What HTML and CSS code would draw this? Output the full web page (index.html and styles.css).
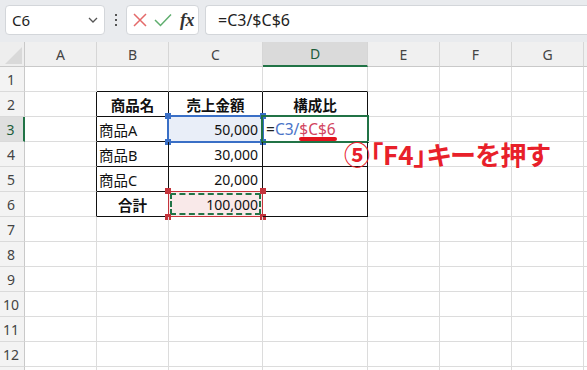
FILE: index.html
```html
<!DOCTYPE html>
<html lang="ja">
<head>
<meta charset="utf-8">
<link rel="stylesheet" href="styles.css">
</head>
<body>
<div class="app">
  <div class="toolbar">
    <div class="namebox"><span>C6</span>
      <svg class="chev" width="10" height="6" viewBox="0 0 10 6"><path d="M1 1 L5 5 L9 1" fill="none" stroke="#555" stroke-width="1.3"/></svg>
    </div>
    <div class="kebab"><i></i><i></i><i></i></div>
    <div class="fbtns">
      <svg class="ix" width="14" height="14" viewBox="0 0 14 14"><path d="M1 1 L13 13 M13 1 L1 13" stroke="#e46a6a" stroke-width="1.5" fill="none"/></svg>
      <svg class="ic" width="18" height="14" viewBox="0 0 18 14"><path d="M1 7 L6.5 12.5 L17 1.5" stroke="#5fae6e" stroke-width="1.5" fill="none"/></svg>
      <span class="fx">fx</span>
    </div>
    <div class="formula">=C3/$C$6</div>
  </div>

  <div class="sheet">
    <div class="corner"></div><div class="ch">A</div><div class="ch">B</div><div class="ch">C</div><div class="ch sel">D</div><div class="ch">E</div><div class="ch">F</div><div class="ch">G</div><div class="ch"></div>

    <div class="rh">1</div><div class="c"></div><div class="c tb"></div><div class="c tb"></div><div class="c tb"></div><div class="c"></div><div class="c"></div><div class="c"></div><div class="c"></div>

    <div class="rh">2</div><div class="c tl"></div><div class="c t hd">商品名</div><div class="c t hd">売上金額</div><div class="c t hd">構成比</div><div class="c"></div><div class="c"></div><div class="c"></div><div class="c"></div>

    <div class="rh rsel">3</div><div class="c tl"></div><div class="c t lt">商品A</div>
    <div class="c t num csel">50,000<span class="selbox"><i class="k k1"></i><i class="k k2"></i><i class="k k3"></i><i class="k k4"></i></span></div>
    <div class="c t lt active"><span class="eq">=</span><span class="r1">C3/</span><span class="r2">$C$6</span><span class="uline"></span></div>
    <div class="c"></div><div class="c"></div><div class="c"></div><div class="c"></div>

    <div class="rh">4</div><div class="c tl"></div><div class="c t lt">商品B</div><div class="c t num">30,000</div><div class="c t"></div><div class="c"></div><div class="c"></div><div class="c"></div><div class="c"></div>

    <div class="rh">5</div><div class="c tl"></div><div class="c t lt">商品C</div><div class="c t num">20,000</div><div class="c t"></div><div class="c"></div><div class="c"></div><div class="c"></div><div class="c"></div>

    <div class="rh">6</div><div class="c tl"></div><div class="c t hd">合計</div>
    <div class="c t num copy">100,000<span class="marq"><i class="k k1"></i><i class="k k2"></i><i class="k k3"></i><i class="k k4"></i></span></div>
    <div class="c t"></div><div class="c"></div><div class="c"></div><div class="c"></div><div class="c"></div>

    <div class="rh">7</div><div class="c"></div><div class="c"></div><div class="c"></div><div class="c"></div><div class="c"></div><div class="c"></div><div class="c"></div><div class="c"></div>
    <div class="rh">8</div><div class="c"></div><div class="c"></div><div class="c"></div><div class="c"></div><div class="c"></div><div class="c"></div><div class="c"></div><div class="c"></div>
    <div class="rh">9</div><div class="c"></div><div class="c"></div><div class="c"></div><div class="c"></div><div class="c"></div><div class="c"></div><div class="c"></div><div class="c"></div>
    <div class="rh">10</div><div class="c"></div><div class="c"></div><div class="c"></div><div class="c"></div><div class="c"></div><div class="c"></div><div class="c"></div><div class="c"></div>
    <div class="rh">11</div><div class="c"></div><div class="c"></div><div class="c"></div><div class="c"></div><div class="c"></div><div class="c"></div><div class="c"></div><div class="c"></div>
    <div class="rh">12</div><div class="c"></div><div class="c"></div><div class="c"></div><div class="c"></div><div class="c"></div><div class="c"></div><div class="c"></div><div class="c"></div>
    <div class="rh"></div><div class="c"></div><div class="c"></div><div class="c"></div><div class="c"></div><div class="c"></div><div class="c"></div><div class="c"></div><div class="c"></div>
  </div>

  <div class="annot">⑤「F4」キーを押す</div>
</div>
</body>
</html>
```

FILE: styles.css
```css
* { box-sizing: border-box; margin: 0; padding: 0; }
html, body { width: 587px; height: 370px; overflow: hidden; background: #fff; }
body { font-family: "Noto Sans", "Noto Sans CJK JP", sans-serif; color: #111; }

.app { position: relative; width: 587px; height: 370px; overflow: hidden; }

/* ---------- toolbar ---------- */
.toolbar {
  height: 42px;
  background: #e9ebee;
  display: flex;
  align-items: flex-start;
  padding: 5px 0 0 5px;
}
.namebox {
  width: 100px; height: 30px;
  background: #fff;
  border: 1px solid #d3d6da;
  border-radius: 4px;
  display: flex; align-items: center; justify-content: space-between;
  padding: 0 6px 0 6px;
  font-size: 15px; color: #222;
}
.kebab {
  width: 21px; height: 30px;
  display: flex; flex-direction: column; align-items: center; justify-content: center; gap: 3px;
}
.kebab i { display: block; width: 2px; height: 2px; background: #555; }
.fbtns {
  width: 73px; height: 30px;
  background: #fff;
  border: 1px solid #d3d6da;
  border-radius: 4px;
  display: flex; align-items: center;
  padding-left: 6px;
}
.ic { margin-left: 7px; }
.fx {
  margin-left: 8px;
  font-family: "Liberation Serif", "DejaVu Serif", serif;
  font-style: italic;
  font-weight: 700;
  font-size: 18px;
  color: #333;
  letter-spacing: -0.5px;
}
.formula {
  flex: 1;
  margin-left: 6px;
  height: 30px;
  background: #fff;
  border: 1px solid #d3d6da;
  border-right: none;
  border-radius: 4px 0 0 4px;
  padding-left: 12px;
  display: flex; align-items: center;
  font-size: 16px; color: #222;
}

/* ---------- sheet ---------- */
.sheet {
  display: grid;
  grid-template-columns: 25px 72px 72px 94px 105px 72px 72px 72px 40px;
  grid-auto-rows: 25px;
}
.corner {
  position: relative;
  background: #eeeeee;
  border-right: 1px solid #c9c9c9;
  border-bottom: 1px solid #c9c9c9;
}
.corner::after {
  content: "";
  position: absolute;
  left: 5px; top: 5px; width: 17px; height: 17px;
  background: #d9d9d9;
  clip-path: polygon(100% 0, 100% 100%, 0 100%);
}
.ch {
  background: #f0f0f0;
  border-right: 1px solid #d6d6d6;
  border-bottom: 1px solid #c9c9c9;
  display: flex; align-items: center; justify-content: center;
  font-size: 14px; color: #444;
}
.ch.sel {
  background: #dadada;
  border-bottom: 2px solid #217346;
  color: #1d5c3a;
}
.rh {
  background: #f3f3f3;
  border-right: 1px solid #c9c9c9;
  border-bottom: 1px solid #dadada;
  display: flex; align-items: center; justify-content: center;
  font-size: 14px; color: #444;
  padding-right: 2px;
}
.rh.rsel {
  background: #dedede;
  border-right: 2px solid #217346;
  color: #1d5c3a;
}
.c {
  position: relative;
  border-right: 1px solid #dcdcdc;
  border-bottom: 1px solid #dcdcdc;
  display: flex; align-items: center;
  font-size: 14px; color: #111;
  white-space: nowrap;
}
.c.tb { border-bottom-color: #111; }
.c.tl { border-right-color: #111; }
.c.t { border-right-color: #111; border-bottom-color: #111; }
.c.hd { justify-content: center; font-weight: 700; font-size: 14.5px; }
.c.lt { padding-left: 2px; font-size: 14.5px; }
.c.num { justify-content: flex-end; padding-right: 4px; }

/* selected C3 */
.c.csel { background: #e9eef8; }
.selbox {
  position: absolute;
  left: -2px; top: -2px; right: -2px; bottom: -2px;
  border: 2px solid #3a6fc6;
}
.selbox .k { position: absolute; width: 6px; height: 6px; background: #3a6fc6; }
.k1 { left: -4px; top: -4px; }
.k2 { right: -4px; top: -4px; }
.k3 { left: -4px; bottom: -4px; }
.k4 { right: -4px; bottom: -4px; }

/* copy marquee C6 */
.c.copy { background: #f9e9e9; }
.marq {
  position: absolute;
  left: -1px; top: -1px; right: -1px; bottom: -1px;
  border: 1px solid #c4343c;
}
.marq::before {
  content: "";
  position: absolute;
  inset: 1px;
  border: 2px dashed #217346;
}
.marq .k { position: absolute; width: 6px; height: 6px; background: #c4343c; }

/* active D3 */
.c.active { padding-left: 3px; font-size: 15.5px; }
.c.active::after {
  content: "";
  position: absolute;
  left: -2px; top: -2px; right: -2px; bottom: -2px;
  border: 2px solid #217346;
}
.eq { color: #222; }
.r1 { color: #4a74c8; }
.r2 { color: #d2445e; }
.uline {
  position: absolute;
  left: 36px; top: 20px;
  width: 38px; height: 4px;
  border-radius: 2px;
  background: #e3141d;
  z-index: 2;
}

/* annotation */
.annot {
  position: absolute;
  left: 344px; top: 139px;
  font-family: "Noto Sans CJK JP", sans-serif;
  font-weight: 700;
  font-size: 26px;
  line-height: 30px;
  color: #e8202a;
  font-feature-settings: "palt";
  white-space: nowrap;
}
```
